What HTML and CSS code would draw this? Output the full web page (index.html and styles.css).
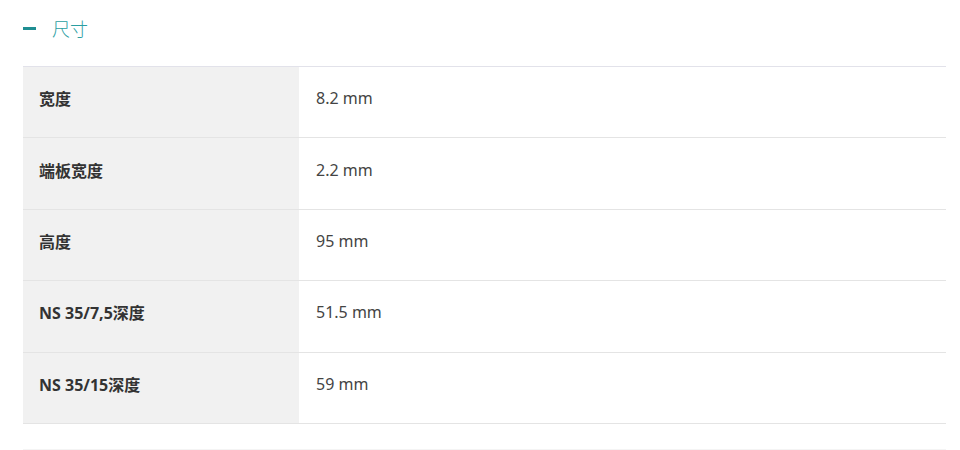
FILE: index.html
```html
<!DOCTYPE html>
<html lang="zh">
<head>
<meta charset="utf-8">
<link rel="stylesheet" href="styles.css">
</head>
<body>
<section class="panel">
  <h2 class="panel-title"><span class="dash"></span><span class="title-text">尺寸</span></h2>
  <table class="spec">
    <tbody>
      <tr><th>宽度</th><td>8.2 mm</td></tr>
      <tr><th>端板宽度</th><td>2.2 mm</td></tr>
      <tr><th>高度</th><td>95 mm</td></tr>
      <tr><th>NS 35/7,5深度</th><td>51.5 mm</td></tr>
      <tr><th>NS 35/15深度</th><td>59 mm</td></tr>
    </tbody>
  </table>
  <div class="after"></div>
</section>
</body>
</html>
```
FILE: styles.css
```css
html, body {
  margin: 0;
  padding: 0;
  background: #fff;
}
body {
  font-family: "Noto Sans", "Noto Sans CJK SC", sans-serif;
  color: #333;
}
.panel {
  padding: 0 14px 0 23px;
}
.panel-title {
  margin: 0;
  height: 66px;
  display: flex;
  align-items: center;
  padding-bottom: 10px;
  box-sizing: border-box;
  font-weight: 400;
  font-size: 18px;
}
.dash {
  display: inline-block;
  width: 13px;
  height: 3px;
  background: #1f8e92;
  margin-right: 16px;
}
.title-text {
  color: #2a9ea1;
  font-family: "Noto Sans CJK SC", sans-serif;
  font-weight: 300;
  line-height: 1;
}
.spec {
  width: 100%;
  border-collapse: collapse;
  border-top: 1px solid #e2e2ea;
}
.spec th, .spec td {
  height: 71.4px;
  box-sizing: border-box;
  padding: 0 16px;
  border-bottom: 1px solid #e4e4e4;
  text-align: left;
  vertical-align: middle;
  font-size: 16px;
  padding-bottom: 8px;
}
.spec th {
  width: 276px;
  background: #f1f1f1;
  font-weight: 700;
  color: #333;
}
.spec td {
  padding-left: 17px;
  font-weight: 400;
  color: #444;
}
.after {
  height: 25px;
  border-bottom: 1px solid #f4f4f4;
}
```
